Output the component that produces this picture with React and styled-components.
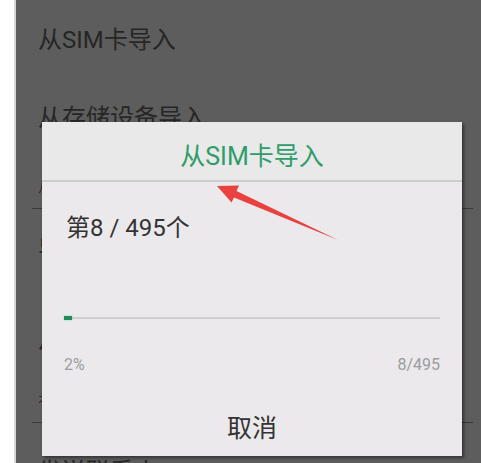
import React from 'react';
import styled, { createGlobalStyle } from 'styled-components';

const GlobalStyle = createGlobalStyle`
  html, body {
    margin: 0;
    padding: 0;
    background: #ffffff;
    font-family: Roboto, "Noto Sans CJK SC", "Liberation Sans", sans-serif;
  }
`;

const Page = styled.div`
  position: relative;
  width: 481px;
  height: 463px;
  overflow: hidden;
  background: #ffffff;
`;

const Screen = styled.div`
  margin-left: 14px;
  height: 463px;
  background: #5d5d5d;
  border-left: 2px solid #d6d6d6;
  display: flex;
  flex-direction: column;
  padding-top: 20px;
  box-sizing: border-box;
`;

const Row = styled.div`
  padding: ${p => p.$pad || '0'};
  margin: 0 8px 0 16px;
  border-bottom: ${p => (p.$line ? '1px solid #3a3a3a' : 'none')};
  display: flex;
  flex-direction: column;
  gap: ${p => p.$gap || '0'};
  flex-shrink: 0;
`;

const RowTitle = styled.div`
  padding-left: 6px;
  font-size: 24px;
  line-height: 40px;
  color: #262626;
`;

const RowSub = styled.div`
  padding-left: 6px;
  font-size: 14px;
  line-height: 20px;
  color: #2c2c2c;
`;

const Dialog = styled.div`
  position: absolute;
  left: 42px;
  top: 122px;
  width: 420px;
  height: 334px;
  background: #ebe9eb;
  box-shadow: 2px 2px 3px rgba(0, 0, 0, 0.45);
  display: flex;
  flex-direction: column;
`;

const DialogTitle = styled.div`
  height: 52px;
  padding-top: 6px;
  display: flex;
  align-items: center;
  justify-content: center;
  background: #e9e9e9;
  border-bottom: 2px solid #cdcdcd;
  font-size: 25px;
  color: #2f9c69;
`;

const DialogBody = styled.div`
  flex: 1;
  display: flex;
  flex-direction: column;
  padding: 0 22px 0 22px;
`;

const Counter = styled.div`
  margin: 30px 0 0 2px;
  font-size: 24px;
  line-height: 32px;
  color: #333333;
`;

const Track = styled.div`
  margin-top: 73px;
  height: 2px;
  background: #cfcfcf;
  position: relative;
`;

const Fill = styled.div`
  position: absolute;
  left: 0;
  top: -1px;
  height: 4px;
  background: #1f8a5c;
  box-shadow: 0 0 2px rgba(60, 200, 140, 0.6);
`;

const Labels = styled.div`
  margin-top: 36px;
  display: flex;
  justify-content: space-between;
  font-size: 16px;
  line-height: 20px;
  color: #9c9c9c;
`;

const Cancel = styled.div`
  margin-top: 38px;
  text-align: center;
  font-size: 25px;
  line-height: 32px;
  color: #333333;
`;

const Arrow = styled.svg`
  position: absolute;
  left: 0;
  top: 0;
  pointer-events: none;
`;

export default function App() {
  const done = 8;
  const total = 495;
  const pct = Math.round((done / total) * 100);
  return (
    <>
      <GlobalStyle />
      <Page>
        <Screen>
          <Row $pad="0 0 38px 0">
            <RowTitle>从SIM卡导入</RowTitle>
          </Row>
          <Row $line $pad="0 0 11px 0" $gap="39px">
            <RowTitle>从存储设备导入</RowTitle>
            <RowSub>从手机存储导入</RowSub>
          </Row>
          <Row $pad="21px 0 0 0">
            <RowTitle>导入联系人</RowTitle>
          </Row>
          <Row $line $pad="50px 0 12px 0" $gap="30px">
            <RowTitle>从其他应用导入</RowTitle>
            <RowSub>衤</RowSub>
          </Row>
          <Row $pad="29px 0 0 0">
            <RowTitle>发送联系人</RowTitle>
          </Row>
        </Screen>

        <Dialog>
          <DialogTitle>从SIM卡导入</DialogTitle>
          <DialogBody>
            <Counter>第{done} / {total}个</Counter>
            <Track>
              <Fill style={{ width: `${Math.max(pct, 1.3)}%` }} />
            </Track>
            <Labels>
              <span>{pct}%</span>
              <span>{done}/{total}</span>
            </Labels>
            <Cancel>取消</Cancel>
          </DialogBody>
        </Dialog>

        <Arrow width="481" height="463" viewBox="0 0 481 463">
          <polygon
            points="217,186 239,185.5 236.5,191 338,240 234,197.5 231.5,202.5"
            fill="#e8413f"
          />
        </Arrow>
      </Page>
    </>
  );
}
